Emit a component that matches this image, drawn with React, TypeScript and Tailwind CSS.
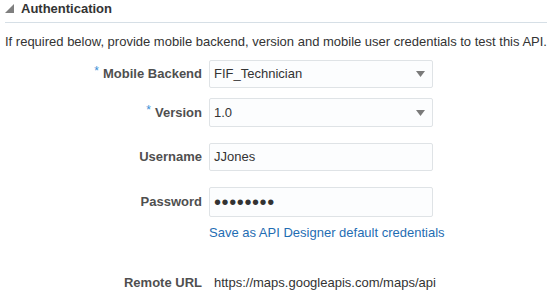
import React from "react";

function Caret() {
  return (
    <svg width="9" height="6" viewBox="0 0 9 6" className="absolute right-[7px] top-1/2 -translate-y-1/2">
      <polygon points="0,0 9,0 4.5,6" fill="#7a7a7a" />
    </svg>
  );
}

function Label({ text, required }: { text: string; required?: boolean }) {
  return (
    <div className="flex h-full items-center justify-end whitespace-nowrap pr-[7px] text-[13px] font-bold text-[#4f4f4f]">
      {required && <span className="mr-[4px] -mt-[6px] text-[12px] font-normal leading-[12px] text-[#3b8fd6]">*</span>}
      <span>{text}</span>
    </div>
  );
}

function Box({ children, select }: { children: React.ReactNode; select?: boolean }) {
  return (
    <div className="relative flex h-full w-[224px] items-center rounded-[2px] border border-[#dfe3e6] bg-[#fcfdfe] pl-[4px] text-[13px] text-[#333]">
      {children}
      {select && <Caret />}
    </div>
  );
}

export default function App() {
  return (
    <div className="h-[293px] w-[547px] overflow-hidden bg-white" style={{ fontFamily: '"Liberation Sans", Arial, sans-serif' }}>
      <div className="ml-[5px] flex h-[23px] items-start border-b border-[#d6dfe6] pt-[1px]">
        <svg width="9" height="9" viewBox="0 0 9 9" className="mt-[3px]">
          <polygon points="9,0 9,9 0,9" fill="#7f7f7f" />
        </svg>
        <span className="ml-[7px] text-[13px] font-bold leading-[16px] text-[#333]">Authentication</span>
      </div>
      <div className="ml-[5px] mt-[11px] whitespace-nowrap text-[13px] leading-[16px] text-[#333]">
        If required below, provide mobile backend, version and mobile user credentials to test this API.
      </div>
      <div className="mt-[10px] grid grid-cols-[209px_224px]">
        <div className="h-[28px]"><Label text="Mobile Backend" required /></div>
        <div className="h-[28px]"><Box select>FIF_Technician</Box></div>
        <div className="mt-[10px] h-[29px]"><Label text="Version" required /></div>
        <div className="mt-[10px] h-[29px]"><Box select>1.0</Box></div>
        <div className="mt-[16px] h-[28px]"><Label text="Username" /></div>
        <div className="mt-[16px] h-[28px]"><Box>JJones</Box></div>
        <div className="mt-[16px] h-[30px]"><Label text="Password" /></div>
        <div className="mt-[16px] h-[30px]">
          <Box>
            <span className="text-[20px] leading-[16px] tracking-[0.6px] text-[#333]">••••••••</span>
          </Box>
        </div>
        <div />
        <div className="mt-[8px] whitespace-nowrap text-[13px] leading-[16px] text-[#1f6db3]">Save as API Designer default credentials</div>
        <div className="mt-[34px] h-[16px]"><Label text="Remote URL" /></div>
        <div className="mt-[34px] h-[16px] whitespace-nowrap pl-[5px] text-[13px] leading-[16px] text-[#333]">
          https://maps.googleapis.com/maps/api
        </div>
      </div>
    </div>
  );
}
